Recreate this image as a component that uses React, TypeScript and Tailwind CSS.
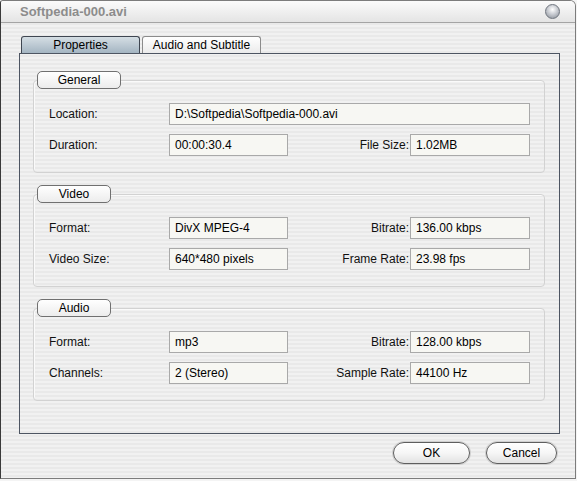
import React from "react";

const stripes =
  "bg-[repeating-linear-gradient(180deg,#f1f1f1_0px,#f1f1f1_2px,#e9e9e9_2px,#e9e9e9_4px)]";

function Field({ value, className = "" }: { value: string; className?: string }) {
  return (
    <div
      className={
        "h-[22px] border border-[#a9a9a9] bg-[#f7f7f3] pl-[5px] flex items-center text-[12px] text-black whitespace-nowrap " +
        className
      }
    >
      {value}
    </div>
  );
}

function Row({
  label,
  value,
  rLabel,
  rValue,
}: {
  label: string;
  value: string;
  rLabel?: string;
  rValue?: string;
}) {
  return (
    <div className="flex items-center h-[22px]">
      <div className="w-[120px] text-[12px] text-[#111]">{label}</div>
      {rLabel ? (
        <>
          <Field value={value} className="w-[119px]" />
          <div className="flex-1 text-right pr-[1px] text-[12px] text-[#111]">{rLabel}</div>
          <Field value={rValue || ""} className="w-[120px]" />
        </>
      ) : (
        <Field value={value} className="flex-1" />
      )}
    </div>
  );
}

function Group({
  title,
  pillWidth,
  children,
  className = "",
}: {
  title: string;
  pillWidth: string;
  children: React.ReactNode;
  className?: string;
}) {
  return (
    <div className={"flex flex-col w-[512px] " + className}>
      <div
        className={
          "relative z-10 ml-[4px] h-[18px] rounded-[5px] border border-[#707070] bg-[linear-gradient(180deg,#ffffff,#ececec)] flex items-center justify-center text-[12px] text-black " +
          pillWidth
        }
      >
        {title}
      </div>
      <div className="-mt-[9px] rounded-[4px] border border-[#d2d2d2] shadow-[inset_1px_1px_0_#fafafa] pt-[22px] pb-[16px] pl-[15px] pr-[14px] flex flex-col gap-[9px]">
        {children}
      </div>
    </div>
  );
}

function PillButton({ label, width }: { label: string; width: string }) {
  return (
    <div
      className={
        "h-[22px] rounded-full border border-[#5e5e5e] bg-[linear-gradient(180deg,#ffffff_0%,#f6f6f6_50%,#e2e2e2_100%)] shadow-[0_0_0_1px_#d0d0d0,inset_0_1px_2px_#ffffff] flex items-center justify-center text-[12px] text-black " +
        width
      }
    >
      {label}
    </div>
  );
}

export default function App() {
  return (
    <div
      className="relative w-[577px] h-[481px] bg-[#f4f4f4] overflow-hidden"
      style={{ fontFamily: '"Liberation Sans", Arial, sans-serif' }}
    >
      <div
        className={
          "w-[576px] h-[479px] border border-[#7c7c7c] border-l-[#3a3a3a] rounded-tr-[6px] rounded-tl-[3px] overflow-hidden flex flex-col " +
          stripes
        }
      >
        {/* title bar */}
        <div className="h-[22px] shrink-0 border-b border-[#a4a4a4] bg-[linear-gradient(180deg,#fbfbfb,#e4e4e4)] flex items-center pl-[19px] pr-[15px]">
          <div className="flex-1 text-[13px] font-bold text-[#8c8c8c] leading-none">
            Softpedia-000.avi
          </div>
          <div className="w-[15px] h-[15px] rounded-full border border-[#6f757e] bg-[radial-gradient(circle_at_50%_35%,#ffffff_0%,#c9ccd2_45%,#858b94_100%)]" />
        </div>

        {/* body */}
        <div className="flex flex-col pl-[18px] pt-[13px]">
          {/* tabs */}
          <div className="flex gap-[2px] ml-[2px] h-[17px]">
            <div className="w-[119px] h-[17px] rounded-t-[3px] border border-b-0 border-[#3f4651] bg-[linear-gradient(180deg,#d5dee4,#a4b5c2)] flex items-center justify-center text-[12px] text-black">
              Properties
            </div>
            <div className="w-[119px] h-[17px] rounded-t-[3px] border border-b-0 border-[#8b8b8b] bg-[linear-gradient(180deg,#ffffff,#ebebeb)] flex items-center justify-center text-[12px] text-black">
              Audio and Subtitle
            </div>
          </div>

          {/* panel */}
          <div className="w-[541px] h-[381px] border border-[#4d5562] pt-[17px] pl-[13px] flex flex-col">
            <Group title="General" pillWidth="w-[84px]">
              <Row label="Location:" value="D:\Softpedia\Softpedia-000.avi" />
              <Row label="Duration:" value="00:00:30.4" rLabel="File Size:" rValue="1.02MB" />
            </Group>
            <Group title="Video" pillWidth="w-[74px]" className="mt-[12px]">
              <Row label="Format:" value="DivX MPEG-4" rLabel="Bitrate:" rValue="136.00 kbps" />
              <Row label="Video Size:" value="640*480 pixels" rLabel="Frame Rate:" rValue="23.98 fps" />
            </Group>
            <Group title="Audio" pillWidth="w-[74px]" className="mt-[12px]">
              <Row label="Format:" value="mp3" rLabel="Bitrate:" rValue="128.00 kbps" />
              <Row label="Channels:" value="2 (Stereo)" rLabel="Sample Rate:" rValue="44100 Hz" />
            </Group>
          </div>

          {/* buttons */}
          <div className="flex justify-end gap-[16px] pt-[8px] pr-[18px]">
            <PillButton label="OK" width="w-[77px]" />
            <PillButton label="Cancel" width="w-[71px]" />
          </div>
        </div>
      </div>
    </div>
  );
}
